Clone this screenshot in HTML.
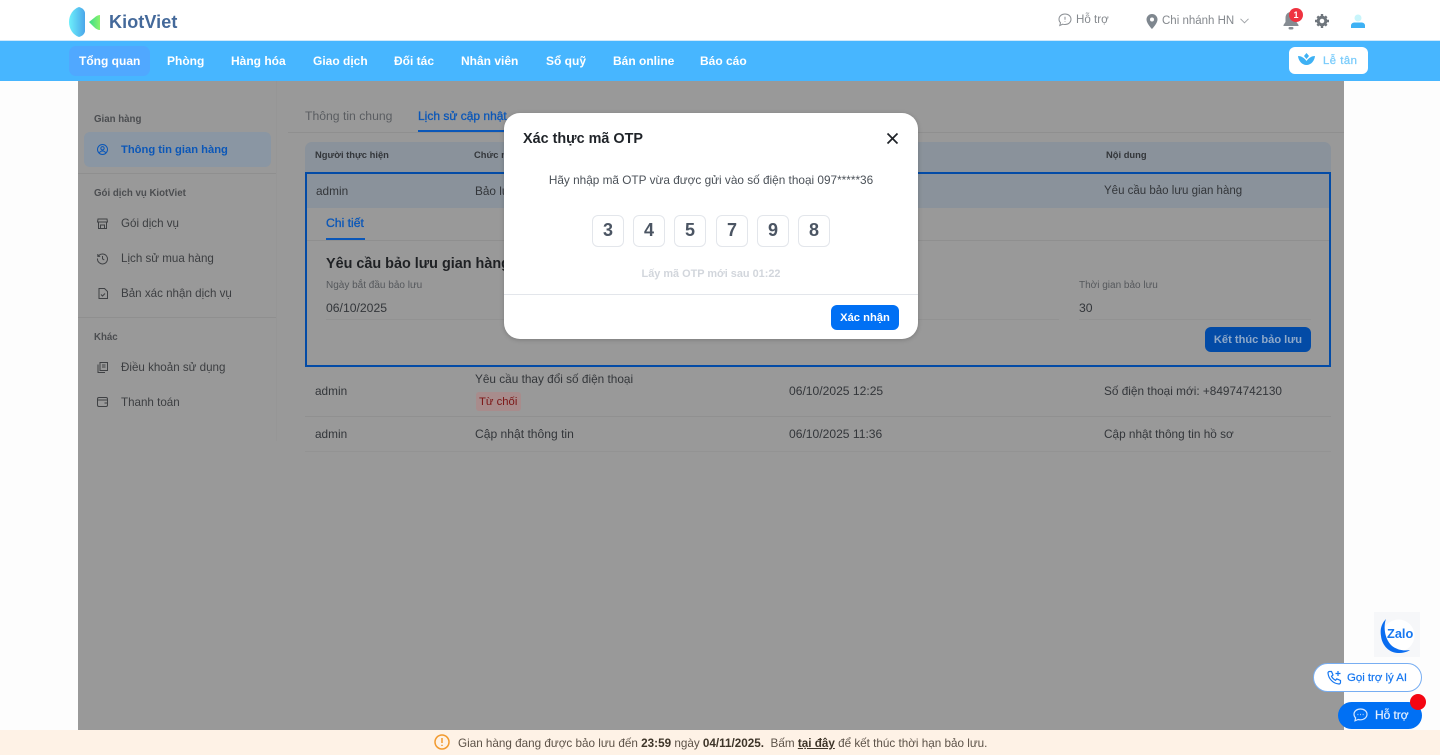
<!DOCTYPE html>
<html lang="vi"><head><meta charset="utf-8"><title>KiotViet</title>
<style>
*{box-sizing:border-box}
html,body{margin:0;padding:0;width:1440px;height:755px;overflow:hidden;background:#fdfdfd;font-family:"Liberation Sans","Noto Sans CJK SC",sans-serif;color:#3a3d42}
.t{position:absolute;white-space:nowrap;line-height:20px;font-size:11.8px}
.b{font-weight:700}
.a{position:absolute}
.nav{color:#fff;font-weight:700;font-size:12px;top:51px}
.d{color:#33363a}
.g{color:#55585c;font-size:10px}
.h{font-size:9.4px;font-weight:700;color:#33363a}
.side{color:#3c3e41;font-size:11.6px}
.sec{color:#4b4d50;font-size:9.7px;font-weight:700}
.otp{position:absolute;top:215px;width:32px;height:32px;border:1px solid #e3e6eb;border-radius:6px;background:#fff;color:#4b5563;font-weight:700;font-size:18px;line-height:29px;text-align:center}
svg{position:absolute;overflow:visible}
</style></head><body>

<!-- top header -->
<div class="a" style="left:0;top:0;width:1440px;height:41px;background:#fff;border-bottom:1px solid #cfe9fb"></div>
<svg style="left:68px;top:6px" width="34" height="32" viewBox="0 0 34 32">
<defs><linearGradient id="lg1" x1="0" y1="0" x2="1" y2="0"><stop offset="0" stop-color="#6df0fb"/><stop offset="1" stop-color="#4aa6ea"/></linearGradient>
<linearGradient id="lg2" x1="0" y1="0" x2="1" y2="0"><stop offset="0" stop-color="#38dc8a"/><stop offset="1" stop-color="#8bf26d"/></linearGradient></defs>
<path d="M11 1C5 3 1 9 1 16s4 13 10 15c4-1 6-4 6-6V7c0-2-2-5-6-6z" fill="url(#lg1)"/>
<path d="M32 9c-2 0-4 1-6 3l-5 4 5 5c2 2 4 3 6 3z" fill="url(#lg2)"/>
</svg>
<div class="t b" style="left:109px;top:12px;font-size:18px;color:#44699a;letter-spacing:.1px">KiotViet</div>

<svg style="left:1058px;top:13px" width="14" height="14" viewBox="0 0 14 14" fill="none" stroke="#8b8f94" stroke-width="1"><path d="M7 1C3.500 1 1 3.300 1 6.200c0 1.400.6 2.600 1.500 3.500L1.800 12.500l3-1.300c.7.200 1.400.300 2.200.300 3.500 0 6-2.300 6-5.300S10.500 1 7 1z"/><path d="M7 3.800v3M7 8.400v.6"/></svg>
<div class="t" style="left:1076px;top:10px;color:#84888d;font-size:11.6px">Hỗ trợ</div>
<svg style="left:1146px;top:14px" width="12" height="15" viewBox="0 0 12 15"><path fill-rule="evenodd" d="M6 0a5.500 5.500 0 0 0-5.500 5.500C.5 9.500 6 15 6 15s5.500-5.500 5.500-9.500A5.500 5.500 0 0 0 6 0zm0 3.500a2 2 0 1 1 0 4 2 2 0 0 1 0-4z" fill="#7f878f"/></svg>
<div class="t" style="left:1162px;top:11px;color:#85898e;font-size:11.5px">Chi nhánh HN</div>
<svg style="left:1240px;top:18px" width="9" height="6" viewBox="0 0 9 6" fill="none" stroke="#a0a4a8"><path d="M.5.800 4.500 4.800 8.500.800"/></svg>
<svg style="left:1283px;top:12px" width="16" height="18" viewBox="0 0 16 18"><path d="M8 0C4.500 0 2.500 2.700 2.500 6v4L.5 13v1h15v-1l-2-3V6C13.500 2.700 11.500 0 8 0z" fill="#868c92"/><rect x="5.500" y="15" width="5" height="2.500" rx="1.200" fill="#868c92"/></svg>
<div class="a" style="left:1289px;top:8px;width:14px;height:14px;border-radius:50%;background:#ef3340;color:#fff;font-size:9px;font-weight:700;line-height:14px;text-align:center">1</div>
<svg style="left:1315px;top:14px" width="14" height="14" viewBox="0 0 14 14"><circle cx="7" cy="7" r="3.800" fill="none" stroke="#6f767d" stroke-width="3"/><path d="M5.800 0h2.400v3H5.800zM5.800 11h2.400v3H5.800zM0 5.800h3v2.400H0zM11 5.800h3v2.400h-3zM1.500 3.200l1.700-1.700 2 2-1.700 1.700zM8.800 10.500l1.700-1.700 2 2-1.700 1.700zM1.500 10.800l2-2 1.700 1.700-2 2zM8.800 3.500l2-2 1.700 1.700-2 2z" fill="#6f767d"/></svg>
<svg style="left:1351px;top:14px" width="14" height="15" viewBox="0 0 14 15"><circle cx="7" cy="4" r="3.500" fill="#c8f5fb"/><path d="M0 14v-2.500C0 9.500 2 8.500 3.500 8.500h7c1.500 0 3.500 1 3.500 3V14z" fill="#3eb1f4"/></svg>

<!-- nav bar -->
<div class="a" style="left:0;top:41px;width:1440px;height:40px;background:#47b6ff"></div>
<div class="a" style="left:69px;top:46px;width:81px;height:30px;border-radius:7px;background:#50a8ff"></div>
<div class="t nav" style="left:79px">Tổng quan</div>
<div class="t nav" style="left:167px">Phòng</div>
<div class="t nav" style="left:231px">Hàng hóa</div>
<div class="t nav" style="left:313px">Giao dịch</div>
<div class="t nav" style="left:394px">Đối tác</div>
<div class="t nav" style="left:461px">Nhân viên</div>
<div class="t nav" style="left:546px">Sổ quỹ</div>
<div class="t nav" style="left:613px">Bán online</div>
<div class="t nav" style="left:700px">Báo cáo</div>
<div class="a" style="left:1289px;top:47px;width:79px;height:27px;border-radius:6px;background:#fff"></div>
<svg style="left:1298px;top:53px" width="17" height="14" viewBox="0 0 17 14"><path d="M8.500 0 11 3 8.500 6 6 3z" fill="#3eb1f4"/><path d="M0 3c3 0 6 1.500 8.500 5C11 4.500 14 3 17 3c-.5 5-4 9-8.500 9S.5 8 0 3z" fill="#3eb1f4"/></svg>
<div class="t" style="left:1323px;top:51px;color:#7accfb;font-size:11.300px;letter-spacing:.5px;-webkit-text-stroke:.3px #7accfb">Lễ tân</div>

<!-- dimmed page -->
<div class="a" style="left:78px;top:81px;width:1266px;height:649px;background:#999"></div>
<div class="a" style="left:276px;top:81px;width:1px;height:360px;background:#969696"></div>

<!-- sidebar -->
<div class="t sec" style="left:94px;top:110px">Gian hàng</div>
<div class="a" style="left:84px;top:132px;width:187px;height:35px;border-radius:6px;background:#8a96a3"></div>
<svg style="left:97px;top:144px" width="11" height="11" viewBox="0 0 11 11" fill="none" stroke="#0b57b8"><circle cx="5.500" cy="5.500" r="5"/><circle cx="5.500" cy="4.300" r="1.700"/><path d="M2.300 9c.6-1.300 1.800-2 3.200-2s2.600.7 3.200 2"/></svg>
<div class="t b" style="left:121px;top:140px;color:#0b57b8;font-size:11.200px">Thông tin gian hàng</div>
<div class="a" style="left:78px;top:173px;width:198px;height:1px;background:#8f8f8f"></div>
<div class="t sec" style="left:94px;top:184px">Gói dịch vụ KiotViet</div>
<svg style="left:97px;top:218px" width="11" height="11" viewBox="0 0 11 11" fill="none" stroke="#3f4144"><path d="M1 1h9l.5 3H.5zM1.500 4v6.500h8V4M3.500 10.500V7h4v3.500"/></svg>
<div class="t side" style="left:121px;top:214px">Gói dịch vụ</div>
<svg style="left:97px;top:253px" width="11" height="11" viewBox="0 0 11 11" fill="none" stroke="#3f4144"><path d="M1.300 3.200A5 5 0 1 1 .5 5.500M.8 1v2.400h2.400M5.500 3v2.800l1.800 1.200"/></svg>
<div class="t side" style="left:121px;top:249px">Lịch sử mua hàng</div>
<svg style="left:98px;top:288px" width="10" height="11" viewBox="0 0 10 11" fill="none" stroke="#3f4144"><path d="M1 .5h5.500L9.500 3.500v7H1zM3 6.500l1.500 1.500 2.500-2.500"/></svg>
<div class="t side" style="left:121px;top:284px">Bản xác nhận dịch vụ</div>
<div class="a" style="left:78px;top:317px;width:198px;height:1px;background:#8f8f8f"></div>
<div class="t sec" style="left:94px;top:328px">Khác</div>
<svg style="left:97px;top:362px" width="11" height="11" viewBox="0 0 11 11" fill="none" stroke="#3f4144"><path d="M3 .5h7.500v8H3zM1 2.500v8h7M5 3h3.500M5 5h3.500"/></svg>
<div class="t side" style="left:121px;top:358px">Điều khoản sử dụng</div>
<svg style="left:97px;top:397px" width="11" height="10" viewBox="0 0 11 10" fill="none" stroke="#3f4144"><rect x=".5" y=".5" width="10" height="9" rx="1.500"/><path d="M.5 3h10M7.500 6h3"/></svg>
<div class="t side" style="left:121px;top:393px">Thanh toán</div>

<!-- tabs -->
<div class="t" style="left:305px;top:106px;color:#5a5d61;font-size:12.200px">Thông tin chung</div>
<div class="t" style="left:418px;top:106px;color:#0b57b8;font-size:12px;-webkit-text-stroke:.3px #0b57b8">Lịch sử cập nhật</div>
<div class="a" style="left:288px;top:132px;width:1056px;height:1px;background:#8f8f8f"></div>
<div class="a" style="left:418px;top:130px;width:90px;height:2px;background:#0b57b8"></div>

<!-- table -->
<div class="a" style="left:305px;top:142px;width:1026px;height:30px;border-radius:7px 7px 0 0;background:#8a929b"></div>
<div class="t h" style="left:315px;top:145px">Người thực hiện</div>
<div class="t h" style="left:474px;top:145px">Chức năng</div>
<div class="t h" style="left:1106px;top:145px">Nội dung</div>

<div class="a" style="left:305px;top:172px;width:1026px;height:195px;border:2px solid #034ba6"></div>
<div class="a" style="left:307px;top:174px;width:1022px;height:34px;background:#8a929b"></div>
<div class="t d" style="left:316px;top:181px">admin</div>
<div class="t d" style="left:475px;top:181px">Bảo lưu</div>
<div class="t d" style="left:1104px;top:181px;font-size:11.500px">Yêu cầu bảo lưu gian hàng</div>

<div class="t" style="left:326px;top:213px;color:#0b57b8;font-size:12.200px;-webkit-text-stroke:.3px #0b57b8">Chi tiết</div>
<div class="a" style="left:326px;top:238px;width:39px;height:2px;background:#0b57b8"></div>
<div class="a" style="left:307px;top:240px;width:1022px;height:1px;background:#8f8f8f"></div>
<div class="t b" style="left:326px;top:254px;font-size:14.400px;color:#1f2124">Yêu cầu bảo lưu gian hàng</div>
<div class="t g" style="left:326px;top:276px">Ngày bắt đầu bảo lưu</div>
<div class="t d" style="left:326px;top:298px;font-size:12.200px">06/10/2025</div>
<div class="a" style="left:326px;top:319px;width:733px;height:1px;background:#929292"></div>
<div class="t g" style="left:1079px;top:276px">Thời gian bảo lưu</div>
<div class="t d" style="left:1079px;top:298px;font-size:12.200px">30</div>
<div class="a" style="left:1079px;top:319px;width:232px;height:1px;background:#929292"></div>
<div class="a" style="left:1205px;top:327px;width:106px;height:25px;border-radius:6px;background:#034ba6"></div>
<div class="t b" style="left:1205px;top:330px;width:106px;text-align:center;color:#8fa9c9;font-size:11.100px">Kết thúc bảo lưu</div>

<div class="t d" style="left:315px;top:381px">admin</div>
<div class="t d" style="left:475px;top:369px">Yêu cầu thay đổi số điện thoại</div>
<div class="a" style="left:476px;top:392px;width:45px;height:19px;border-radius:3px;background:#a88c8c"></div>
<div class="t" style="left:479px;top:392px;color:#7c1515;font-size:11.300px">Từ chối</div>
<div class="t d" style="left:789px;top:381px;font-size:12.100px">06/10/2025 12:25</div>
<div class="t d" style="left:1104px;top:381px">Số điện thoại mới: +84974742130</div>
<div class="a" style="left:305px;top:416px;width:1026px;height:1px;background:#909090"></div>
<div class="t d" style="left:315px;top:424px">admin</div>
<div class="t d" style="left:475px;top:424px;font-size:12.100px">Cập nhật thông tin</div>
<div class="t d" style="left:789px;top:424px;font-size:12.100px">06/10/2025 11:36</div>
<div class="t d" style="left:1104px;top:424px">Cập nhật thông tin hồ sơ</div>
<div class="a" style="left:305px;top:451px;width:1026px;height:1px;background:#939393"></div>

<!-- modal -->
<div class="a" style="left:504px;top:113px;width:414px;height:226px;border-radius:16px;background:#fff;box-shadow:0 1px 5px rgba(0,0,0,.2)"></div>
<div class="t b" style="left:523px;top:129px;font-size:14.400px;color:#1f2328">Xác thực mã OTP</div>
<svg style="left:887px;top:133px" width="11" height="11" viewBox="0 0 11 11" fill="none" stroke="#1f2328" stroke-width="1.700"><path d="M.5.500l10 10M10.500.500l-10 10"/></svg>
<div class="t" style="left:504px;top:170px;width:414px;text-align:center;color:#4b5158">Hãy nhập mã OTP vừa được gửi vào số điện thoại 097*****36</div>
<div class="otp" style="left:592px">3</div>
<div class="otp" style="left:633px">4</div>
<div class="otp" style="left:674px">5</div>
<div class="otp" style="left:716px">7</div>
<div class="otp" style="left:757px">9</div>
<div class="otp" style="left:798px">8</div>
<div class="t b" style="left:504px;top:264px;width:414px;text-align:center;color:#d2d6dc;font-size:10.900px">Lấy mã OTP mới sau 01:22</div>
<div class="a" style="left:504px;top:294px;width:414px;height:1px;background:#e3e6eb"></div>
<div class="a" style="left:831px;top:305px;width:68px;height:25px;border-radius:6px;background:#0070f4"></div>
<div class="t b" style="left:831px;top:308px;width:68px;text-align:center;color:#fff;font-size:11.200px">Xác nhận</div>

<!-- right floating -->
<div class="a" style="left:1374px;top:612px;width:46px;height:45px;background:#f6f7f9"></div>
<svg style="left:1380px;top:617px" width="36" height="37" viewBox="0 0 36 37"><circle cx="18.500" cy="18.500" r="16" fill="#fff"/><path d="M6 2C1 7 0 13 1 19 2 29 10 36 18 36c5 0 9-1 12-3-6 1-14 0-19-5C5 22 3 10 6 2z" fill="#0a6df0"/></svg>
<div class="t b" style="left:1387px;top:624px;font-size:12.800px;color:#1677f0">Zalo</div>
<div class="a" style="left:1313px;top:663px;width:109px;height:29px;border-radius:15px;background:#fff;border:1px solid #78aef2"></div>
<svg style="left:1327px;top:670px" width="15" height="15" viewBox="0 0 15 15" fill="none" stroke="#1677f0" stroke-width="1.200"><path d="M2.500 1.500 4.500 1.500 6 5 4.500 6.300C5.300 8 6.800 9.500 8.500 10.300L9.800 8.800 13.500 10.500V12.500C13.500 13.300 12.800 14 12 14 6 13.500 1.500 8.800 1 3 1 2.200 1.700 1.500 2.500 1.500z"/><path d="M11 1v5M8.500 3.500h5"/></svg>
<div class="t" style="left:1347px;top:668px;color:#1677f0;font-size:11.400px;-webkit-text-stroke:.2px #1677f0">Gọi trợ lý AI</div>
<div class="a" style="left:1338px;top:702px;width:84px;height:27px;border-radius:14px;background:#0070f4"></div>
<svg style="left:1353px;top:708px" width="15" height="14" viewBox="0 0 15 14" fill="none" stroke="#d5e7ff" stroke-width="1.200"><path d="M7.500 1C3.800 1 1 3.300 1 6.300c0 1.400.6 2.600 1.600 3.600L2 12.800l3.200-1.300c.7.200 1.500.300 2.300.300 3.700 0 6.500-2.400 6.500-5.500S11.200 1 7.500 1z"/><path d="M4.500 6.500h.8M7.100 6.500h.8M9.700 6.500h.8"/></svg>
<div class="t" style="left:1375px;top:705px;color:#e6f1ff;font-size:11.900px;-webkit-text-stroke:.2px #e6f1ff">Hỗ trợ</div>
<div class="a" style="left:1410px;top:694px;width:16px;height:16px;border-radius:50%;background:#f40612"></div>

<!-- bottom warning -->
<div class="a" style="left:0;top:730px;width:1440px;height:25px;background:#fef2e6"></div>
<svg style="left:434px;top:734px" width="16" height="16" viewBox="0 0 16 16" fill="none" stroke="#f29a2e" stroke-width="1.500"><circle cx="8" cy="8" r="7"/><path d="M8 4v5M8 10.800v1.200"/></svg>
<div class="t" style="left:458px;top:734px;color:#5c5248;font-size:11.700px">Gian hàng đang được bảo lưu đến <b style="color:#3e3529">23:59</b> ngày <b style="color:#3e3529">04/11/2025.</b>&nbsp; Bấm <b style="color:#3e3529;text-decoration:underline">tại đây</b> để kết thúc thời hạn bảo lưu.</div>
</body></html>
